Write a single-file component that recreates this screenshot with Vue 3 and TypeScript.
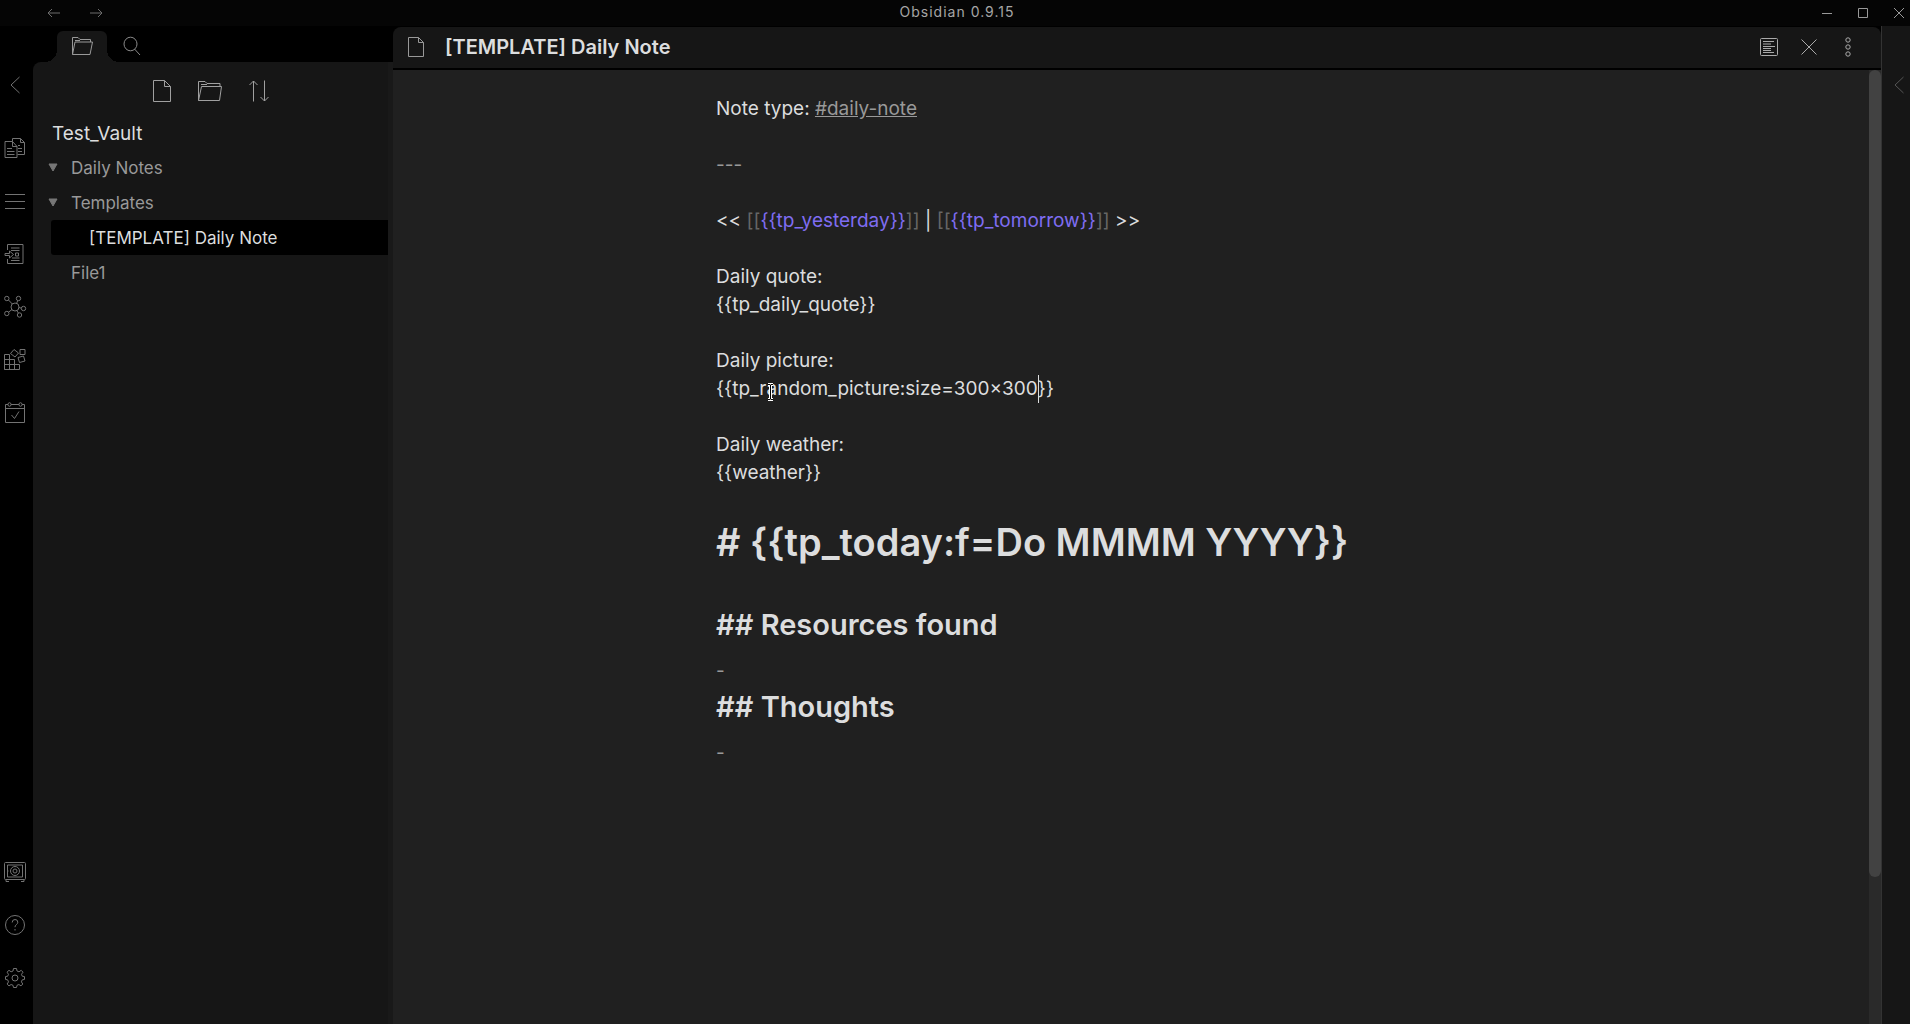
<script setup lang="ts">
import { h, ref } from 'vue'

interface Glyph {
  w: number
  h: number
  d: string
  fill?: string
}

// Line drawings, one unit per pixel
const glyphs: Record<string, Glyph> = {
  back: { w: 14, h: 10, d: 'M13 5H1M5 1L1 5L5 9' },
  forward: { w: 14, h: 10, d: 'M1 5H13M9 1L13 5L9 9' },
  folder: { w: 22, h: 20, d: 'M1.5 18.5V1.5H7L9 3.5H19.5V6M1.5 18.5L4 6H21.5L19 18.5H1.5M4 4.500H9' },
  folderLarge: { w: 26, h: 22, d: 'M1.500 20.500V1.500H8L10 3.500H23V6.500M1.500 20.500L4.500 6.500H24.500L22.500 20.500H1.500M4 4.500H10' },
  search: { w: 20, h: 20, d: 'M15 8A6.500 6.800 0 1 1 2 8A6.500 6.800 0 1 1 15 8ZM12.500 13L18 19' },
  left: { w: 12, h: 18, d: 'M10.500 1L2 9L10.500 17' },
  file: { w: 20, h: 24, d: 'M1.500 1.500H12.500L18.500 7.500V22.500H1.500ZM12.500 1.500V7.500H18.500' },
  fileSmall: { w: 18, h: 22, d: 'M1.500 1.500H11.500L16.500 6.500V20.500H1.500ZM11.500 1.500V6.500H16.500' },
  sort: { w: 22, h: 24, d: 'M5.500 22.500V2M1.500 6L5.500 2L9.500 6M16.500 1.500V22M12.500 18L16.500 22L20.500 18' },
  pages: { w: 22, h: 22, d: 'M8.500 4.500V1.500H16.500L20.500 5.500V17.500H13.500M16.500 1.500V5.500H20.500M1 4.500H8.500L13 9.500V20.500H1ZM8.500 4.500V9.500H13M3 11.500H8M3 14.500H10.500M3 17.500H10.500M14 8.500H16M14 11.500H18M14 14.500H18' },
  lines: { w: 22, h: 22, d: 'M1 4.500H21M1 11.500H21M1 18.500H21' },
  insert: { w: 22, h: 22, d: 'M3.500 7V1.500H19V20.500H3.500V16M7 5H15.500M7 7.500H15.500M8 15H15.500M7 17.500H15.500M1 10.500H5.500V8L9.500 11.500L5.500 15V12.500H1ZM11.500 10H14.500V13H11.500Z' },
  graph: { w: 24, h: 24, d: 'M16 12A4 4 0 1 1 8 12A4 4 0 1 1 16 12ZM6 3.500A2.200 2.200 0 1 1 1.600 3.500A2.200 2.200 0 1 1 6 3.500ZM17.700 3.500A2.200 2.200 0 1 1 13.300 3.500A2.200 2.200 0 1 1 17.700 3.500ZM22.700 13.500A2.200 2.200 0 1 1 18.300 13.500A2.200 2.200 0 1 1 22.700 13.500ZM6 18.500A2.200 2.200 0 1 1 1.600 18.500A2.200 2.200 0 1 1 6 18.500ZM18.700 20A2.200 2.200 0 1 1 14.300 20A2.200 2.200 0 1 1 18.700 20ZM5.500 5L9.300 9M14.800 5.500L13.500 8.500M16 12.500L18.300 13.200M9 14.500L5.500 17.200M13.700 15.500L15.500 18.200' },
  blocks: { w: 24, h: 24, d: 'M1.500 6.500H6.500V21.500H1.500ZM1.500 11.500H11.500V21.500M1.500 16.500H16.500V21.500H1.500M11 1.500L15.500 5L12 9L7.500 5.500ZM17 1.500H22V6.500H17ZM15 9.500L20.500 8L22 13L16.500 14.500Z' },
  calendar: { w: 22, h: 24, d: 'M4 3.500H1.500V21.500H20.500V3.500H18M7 3.500H15M1.500 7.500H20.500M7 3.500A1.500 1.800 0 1 1 4 3.500A1.500 1.800 0 1 1 7 3.500ZM18 3.500A1.500 1.800 0 1 1 15 3.500A1.500 1.800 0 1 1 18 3.500ZM7.500 14L10.500 17.500L15 10.500' },
  vault: { w: 24, h: 22, d: 'M2.500 1.500H21.500Q22.500 1.500 22.500 2.500V17.500Q22.500 18.500 21.500 18.500H2.500Q1.500 18.500 1.500 17.500V2.500Q1.500 1.500 2.500 1.500ZM4.500 4H19.500V16H4.500ZM3 19V20.500H6M21 19V20.500H18M16.500 10A4.500 4.500 0 1 1 7.500 10A4.500 4.500 0 1 1 16.500 10ZM14 10A2 2 0 1 1 10 10A2 2 0 1 1 14 10ZM4 10H5.500' },
  help: { w: 22, h: 22, d: 'M20.500 11A9.500 9.500 0 1 1 1.500 11A9.500 9.500 0 1 1 20.500 11ZM8.200 8.500Q8.200 5.500 11 5.500Q13.800 5.500 13.800 8.200Q13.800 9.500 12.300 10.700Q11 11.700 11 13.200M11 15V16.500' },
  gear: { w: 22, h: 22, d: 'M9.500 1.500H12.500L13 4L15 4.800L17.200 3.300L19 5.200L17.500 7.300L18.200 9.200L20.500 9.600V12.400L18.200 12.900L17.400 14.900L18.800 17L17 18.900L14.900 17.500L13 18.300L12.500 20.500H9.500L9 18.300L7.100 17.500L5 18.900L3.100 17L4.500 14.900L3.700 12.900L1.500 12.400V9.600L3.700 9.200L4.500 7.300L3 5.200L5 3.300L7.100 4.800L9 4ZM14 11A3 3 0 1 1 8 11A3 3 0 1 1 14 11Z' },
  preview: { w: 20, h: 20, d: 'M2.500 1.500H17.500Q18.500 1.500 18.500 2.500V17.500Q18.500 18.500 17.500 18.500H2.500Q1.500 18.500 1.500 17.500V2.500Q1.500 1.500 2.500 1.500ZM4 4.500H15M4 7H12M4 9.500H16M4 11.500H12M4 13.500H12M4 15.500H15' },
  close: { w: 18, h: 18, d: 'M1.500 1.500L16.500 16.500M16.500 1.500L1.500 16.500' },
  more: { w: 8, h: 22, d: 'M6.200 4A2.200 2.200 0 1 1 1.800 4A2.200 2.200 0 1 1 6.200 4ZM6.200 11A2.200 2.200 0 1 1 1.800 11A2.200 2.200 0 1 1 6.200 11ZM6.200 18A2.200 2.200 0 1 1 1.800 18A2.200 2.200 0 1 1 6.200 18Z' },
  minimize: { w: 12, h: 12, d: 'M1 6.500H11' },
  maximize: { w: 12, h: 12, d: 'M1.500 1.500H10.500V10.500H1.500Z' },
  exit: { w: 12, h: 12, d: 'M1 1L11 11M11 1L1 11' },
  triangle: { w: 10, h: 8, d: 'M1 0H9L5 7Z', fill: 'currentColor' },
}

const Icon = (props: { name: string }) => {
  const g = glyphs[props.name]
  return h(
    'svg',
    { width: g.w, height: g.h, viewBox: `0 0 ${g.w} ${g.h}`, fill: g.fill ?? 'none', stroke: 'currentColor', 'aria-hidden': 'true' },
    [h('path', { d: g.d })],
  )
}
Icon.props = ['name']

const ribbonActions = [
  { icon: 'pages', label: 'Open quick switcher' },
  { icon: 'lines', label: 'Open markdown importer' },
  { icon: 'insert', label: 'Insert template' },
  { icon: 'graph', label: 'Open graph view' },
  { icon: 'blocks', label: 'Templater' },
  { icon: 'calendar', label: "Open today's note" },
]
const ribbonSettings = [
  { icon: 'vault', label: 'Open another vault' },
  { icon: 'help', label: 'Help' },
  { icon: 'gear', label: 'Settings' },
]
const windowActions = [
  { icon: 'minimize', label: 'Minimize' },
  { icon: 'maximize', label: 'Maximize' },
  { icon: 'exit', label: 'Close window' },
]

const files = [
  { name: 'Daily Notes', folder: true, depth: 0 },
  { name: 'Templates', folder: true, depth: 0 },
  { name: '[TEMPLATE] Daily Note', folder: false, depth: 1 },
  { name: 'File1', folder: false, depth: 0 },
]
const active = ref('[TEMPLATE] Daily Note')

const open = '{{'
const close = '}}'
const beam = 'M1 1.500H3L3.500 2L4 1.500H6M3.500 2V16M1 16.500H3L3.500 16L4 16.500H6'
</script>

<template>
  <div class="app">
    <header class="titlebar">
      <nav class="history">
        <button aria-label="Back"><Icon name="back" /></button>
        <button aria-label="Forward"><Icon name="forward" /></button>
      </nav>
      <div class="app-title">Obsidian 0.9.15</div>
      <div class="window-actions">
        <button v-for="a in windowActions" :key="a.icon" :aria-label="a.label"><Icon :name="a.icon" /></button>
      </div>
    </header>

    <div class="workspace">
      <nav class="ribbon">
        <button class="collapse" aria-label="Collapse left sidebar"><Icon name="left" /></button>
        <div class="ribbon-group">
          <button v-for="a in ribbonActions" :key="a.icon" :aria-label="a.label"><Icon :name="a.icon" /></button>
        </div>
        <div class="ribbon-group bottom">
          <button v-for="a in ribbonSettings" :key="a.icon" :aria-label="a.label"><Icon :name="a.icon" /></button>
        </div>
      </nav>

      <aside class="sidebar">
        <div class="tabs">
          <button class="tab active" aria-label="File explorer"><Icon name="folder" /></button>
          <button class="tab" aria-label="Search"><Icon name="search" /></button>
        </div>
        <div class="explorer">
          <div class="tools">
            <button aria-label="New note"><Icon name="file" /></button>
            <button aria-label="New folder"><Icon name="folderLarge" /></button>
            <button aria-label="Change sort order"><Icon name="sort" /></button>
          </div>
          <div class="vault">Test_Vault</div>
          <ul class="tree">
            <li v-for="f in files" :key="f.name">
              <button
                class="row"
                :class="{ selected: f.name === active, nested: f.depth > 0 }"
                @click="active = f.name"
              >
                <span class="arrow"><Icon v-if="f.folder" name="triangle" /></span>
                <span>{{ f.name }}</span>
              </button>
            </li>
          </ul>
        </div>
      </aside>

      <main class="pane">
        <header class="pane-header">
          <Icon name="fileSmall" />
          <h1 class="pane-title">[TEMPLATE] Daily Note</h1>
          <div class="pane-actions">
            <button aria-label="Preview"><Icon name="preview" /></button>
            <button aria-label="Close"><Icon name="close" /></button>
            <button aria-label="More options"><Icon name="more" /></button>
          </div>
        </header>
        <div class="pane-body">
          <div class="scroller">
            <div class="editor" role="textbox" aria-multiline="true" aria-label="Note text">
              <div class="line">Note type: <a class="tag" href="#daily-note">#daily-note</a></div>
              <div class="line"></div>
              <div class="line muted">---</div>
              <div class="line"></div>
              <div class="line">&lt;&lt; <span class="bracket">[[</span><span class="link">{{ open }}tp_yesterday{{ close }}</span><span class="bracket">]]</span> | <span class="bracket">[[</span><span class="link">{{ open }}tp_tomorrow{{ close }}</span><span class="bracket">]]</span> &gt;&gt;</div>
              <div class="line"></div>
              <div class="line">Daily quote:</div>
              <div class="line">{{ open }}tp_daily_quote{{ close }}</div>
              <div class="line"></div>
              <div class="line">Daily picture:</div>
              <div class="line">{{ open }}tp_r<span class="pointer-anchor"><svg class="pointer" width="7" height="18" viewBox="0 0 7 18" aria-hidden="true"><path :d="beam" fill="none" stroke="#fff" stroke-width="3" /><path :d="beam" fill="none" stroke="#000" /></svg></span>andom_picture:size=300x300<span class="caret"></span>{{ close }}</div>
              <div class="line"></div>
              <div class="line">Daily weather:</div>
              <div class="line">{{ open }}weather{{ close }}</div>
              <div class="line"></div>
              <div class="line heading-1"># {{ open }}tp_today:f=Do MMMM YYYY{{ close }}</div>
              <div class="line"></div>
              <div class="line heading-2">## Resources found</div>
              <div class="line muted">-</div>
              <div class="line heading-2">## Thoughts</div>
              <div class="line muted">-</div>
            </div>
          </div>
          <div class="scrollbar"><div class="thumb"></div></div>
        </div>
      </main>

      <nav class="right-ribbon">
        <button class="collapse" aria-label="Expand right sidebar"><Icon name="left" /></button>
      </nav>
    </div>
  </div>
</template>

<style>
body {
  margin: 0;
  background: #000;
}
</style>

<style scoped>
.app {
  display: flex;
  flex-direction: column;
  min-height: 100vh;
  background: #000;
  color: #dcddde;
  font-family: Inter, "Liberation Sans", sans-serif;
  font-size: 19px;
}
button {
  display: flex;
  align-items: center;
  justify-content: center;
  margin: 0;
  padding: 0;
  border: 0;
  background: none;
  color: inherit;
  font: inherit;
  cursor: pointer;
}
svg {
  display: block;
  flex: none;
  overflow: visible;
}
.titlebar {
  display: grid;
  grid-template-columns: 1fr auto 1fr;
  align-items: center;
  height: 26px;
  background: #050505;
  color: #6c6c6c;
}
.history {
  display: flex;
  gap: 28px;
  padding-left: 47px;
}
.app-title {
  padding: 0 0 2px 4px;
  color: #a6a6a6;
  font-size: 14px;
  line-height: 24px;
  letter-spacing: 1px;
}
.window-actions {
  display: flex;
  justify-content: flex-end;
  gap: 24px;
  padding-right: 5px;
  color: #999;
}
.workspace {
  display: flex;
  flex: 1;
}
.ribbon {
  display: flex;
  flex-direction: column;
  align-items: center;
  width: 33px;
  padding: 0 3px 35px 0;
  box-sizing: border-box;
  color: #737373;
}
.collapse {
  margin: 50px 0 43px;
}
.ribbon-group {
  display: flex;
  flex-direction: column;
  gap: 31px;
}
.ribbon-group button {
  width: 24px;
  height: 22px;
}
.bottom {
  margin-top: auto;
}
.sidebar {
  display: flex;
  flex-direction: column;
  width: 360px;
}
.tabs {
  display: flex;
  height: 31px;
  padding: 5px 0 0 24px;
  color: #8a8a8a;
}
.tab {
  width: 50px;
  padding: 0 1px 2px 0;
}
.tab.active {
  position: relative;
  border-radius: 6px 6px 0 0;
  background: #161616;
  color: #999;
}
.tab.active::before,
.tab.active::after {
  content: "";
  position: absolute;
  bottom: 0;
  width: 12px;
  height: 12px;
}
.tab.active::before {
  right: 100%;
  background: radial-gradient(circle at 0 0, #000 12px, #161616 12px);
}
.tab.active::after {
  left: 100%;
  background: radial-gradient(circle at 100% 0, #000 12px, #161616 12px);
}
.explorer {
  flex: 1;
  border-right: 5px solid #191919;
  border-radius: 8px 0 0 0;
  background: #161616;
}
.tools {
  display: flex;
  align-items: center;
  justify-content: center;
  gap: 25px;
  padding: 17px 0 14px 1px;
  color: #a0a0a0;
}
.vault {
  padding: 5px 19px 4px;
  color: #dcddde;
  line-height: 24px;
}
.tree {
  margin: 0;
  padding: 0 0 0 18px;
  list-style: none;
}
.row {
  justify-content: flex-start;
  width: 100%;
  height: 35px;
  border-radius: 3px 0 0 3px;
  color: #999;
  font-size: 17px;
}
.row.nested {
  padding-left: 18px;
}
.row.selected {
  background: #000;
  color: #dcddde;
}
.arrow {
  width: 20px;
  color: #777;
}
.row .arrow svg {
  margin-left: -3px;
}
.pane {
  display: flex;
  flex: 1;
  flex-direction: column;
  min-width: 0;
  padding-top: 1px;
}
.pane-header {
  display: flex;
  align-items: center;
  height: 39px;
  padding: 0 29px 2px 14px;
  border-bottom: 2px solid #000;
  border-radius: 8px 8px 0 0;
  background: #161616;
  color: #999;
}
.pane-title {
  flex: 1;
  margin: 0 0 0 20px;
  color: #dcddde;
  font-size: 20px;
  font-weight: 600;
}
.pane-actions {
  display: flex;
  align-items: center;
  gap: 21px;
  color: #aaa;
}
.pane-actions button:last-child {
  margin-left: 5px;
}
.pane-body {
  display: flex;
  flex: 1;
  background: #202020;
}
.scroller {
  flex: 1;
  padding: 25px 20px;
}
.editor {
  max-width: 830px;
  margin: 0 auto;
}
.line {
  min-height: 28px;
  line-height: 28px;
  white-space: pre-wrap;
}
.muted {
  color: #999;
}
.tag {
  color: #999;
  text-decoration: underline;
}
.bracket {
  color: #666;
}
.link {
  color: #7f6df2;
}
.heading-1 {
  padding-bottom: 6px;
  font-size: 38px;
  font-weight: 600;
  line-height: 54px;
}
.heading-2 {
  padding: 1px 0 11px;
  font-size: 29px;
  font-weight: 600;
  line-height: 42px;
}
.caret {
  display: inline-block;
  width: 1px;
  height: 28px;
  margin-right: -1px;
  background: #dcddde;
  vertical-align: top;
}
.pointer-anchor {
  position: relative;
}
.pointer {
  position: absolute;
  top: 6px;
  left: 0;
}
.scrollbar {
  display: flex;
  flex-direction: column;
  width: 12px;
  background: #2a2a2a;
}
.thumb {
  flex: 11;
  border-radius: 6px;
  background: #424242;
}
.scrollbar::after {
  content: "";
  flex: 2;
}
.right-ribbon {
  display: flex;
  flex-direction: column;
  align-items: center;
  width: 29px;
  padding-left: 5px;
  box-sizing: border-box;
  border-left: 1px solid #333;
  background: #161616;
  color: #555;
}
</style>
